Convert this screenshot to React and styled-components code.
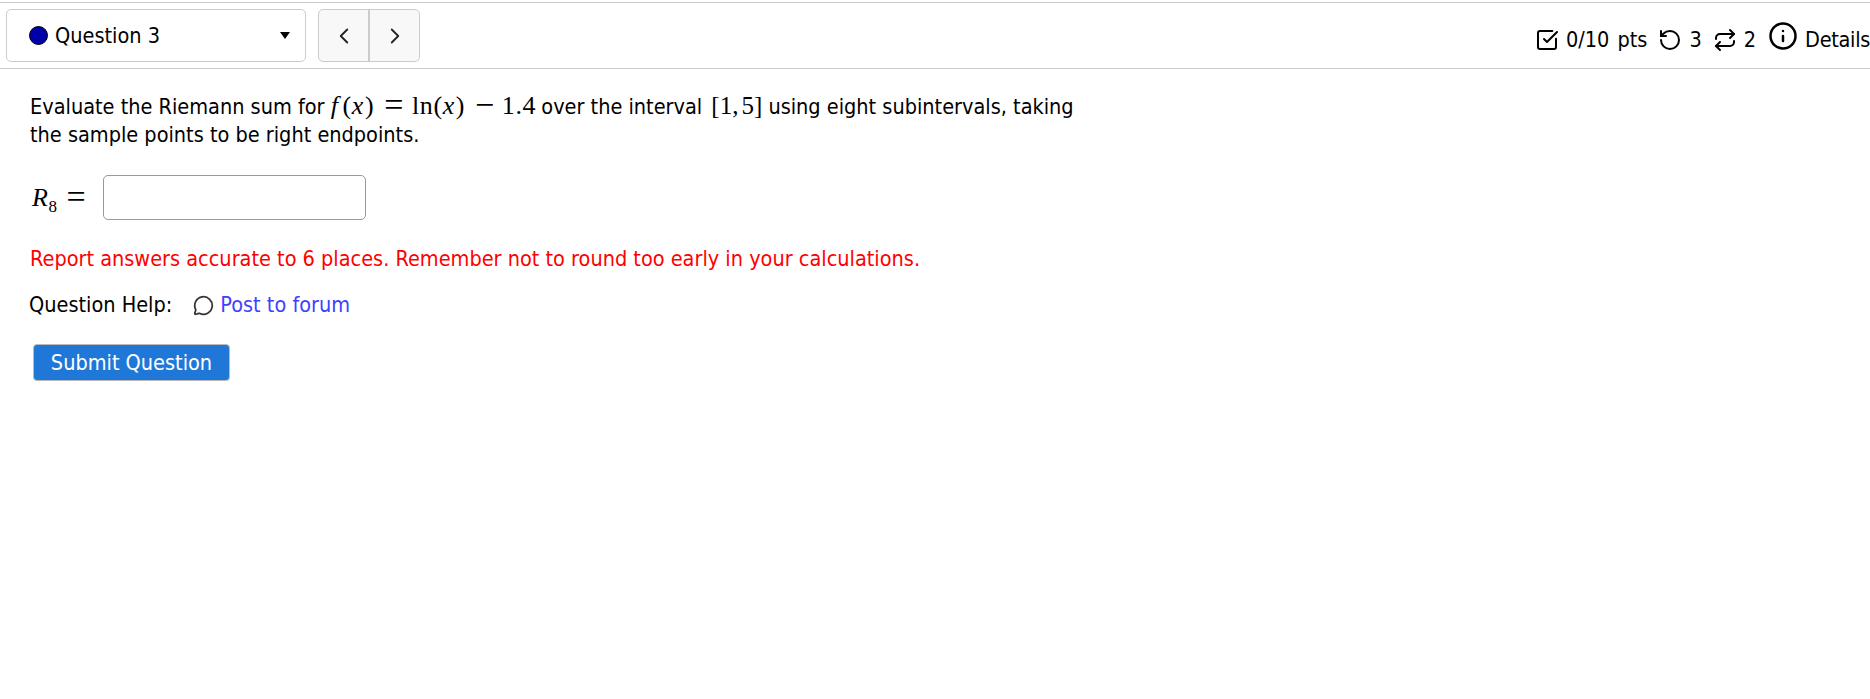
import React from 'react';
import styled, { createGlobalStyle } from 'styled-components';
import { ChevronLeft, ChevronRight, SquareCheckBig, RotateCcw, Repeat, Info, MessageCircle } from 'lucide-react';

const GlobalStyle = createGlobalStyle`
  html, body {
    margin: 0;
    padding: 0;
    background: #fff;
    color: #000;
    font-family: "DejaVu Sans Condensed", "DejaVu Sans", sans-serif;
    font-stretch: condensed;
    font-size: 21.5px;
  }
`;

const Page = styled.div`
  width: 1870px;
  height: 699px;
  overflow: hidden;
  padding-top: 2px;
  box-sizing: border-box;
`;

const Toolbar = styled.div`
  height: 67px;
  box-sizing: border-box;
  border-top: 1px solid #ccc;
  border-bottom: 1px solid #ccc;
  display: flex;
  justify-content: space-between;
  padding: 6px 0 0 6px;
`;

const LeftGroup = styled.div`
  display: flex;
  gap: 12px;
  height: 53px;
`;

const QuestionSelect = styled.div`
  width: 300px;
  box-sizing: border-box;
  border: 1px solid #ccc;
  border-radius: 5px;
  background: #fff;
  display: flex;
  align-items: center;
  padding: 0 15px 0 22px;
`;

const StatusDot = styled.span`
  width: 17px;
  height: 17px;
  border-radius: 50%;
  background: #0000a8;
  border: 1px solid #000;
  margin-right: 7px;
`;

const SelectLabel = styled.span`
  flex: 1;
`;

const Caret = styled.span`
  width: 0;
  height: 0;
  border-left: 5.5px solid transparent;
  border-right: 5.5px solid transparent;
  border-top: 7px solid #000;
`;

const NavGroup = styled.div`
  display: flex;
  width: 102px;
  box-sizing: border-box;
  border: 1px solid #ccc;
  border-radius: 5px;
  background: #f8f8f8;
`;

const NavButton = styled.div`
  flex: 1;
  display: flex;
  align-items: center;
  justify-content: center;
  color: #222;
  & + & {
    border-left: 2px solid #ccc;
  }
`;

const Stats = styled.div`
  display: flex;
  align-items: flex-start;
  padding-top: 16px;
`;

const Stat = styled.span`
  display: flex;
  align-items: center;
  gap: ${(p) => p.$gap ?? 7}px;
  margin-left: ${(p) => p.$left ?? 11}px;
  line-height: 30px;
  word-spacing: ${(p) => p.$words ?? 0}px;
  letter-spacing: ${(p) => p.$tracking ?? 0}px;
  white-space: nowrap;
`;

const RaisedInfo = styled(Info)`
  margin-top: -8px;
`;

const Content = styled.div`
  padding: 24px 0 0 30px;
`;

const Question = styled.p`
  width: 1060px;
  margin: 0;
  line-height: 28px;
`;

const MathRun = styled.span`
  font-family: "Liberation Serif", serif;
  font-stretch: normal;
  font-size: 26px;
  line-height: 20px;
  letter-spacing: 0.6px;
  white-space: nowrap;
  margin: ${(p) => p.$margin || '0 3px'};
`;

const IntervalRun = styled(MathRun)`
  font-size: 25px;
  letter-spacing: 0;
`;

const MathVar = styled.i`
  font-style: italic;
  margin-right: ${(p) => p.$after ?? 1}px;
`;

const MathSub = styled.sub`
  font-size: 17px;
  line-height: 0;
  margin-left: -1px;
`;

const MathOp = styled.span`
  font-size: 34px;
  line-height: 0;
  vertical-align: -2px;
  margin: ${(p) => p.$margin || '0 9px'};
`;

const MathComma = styled.span`
  margin-right: 3px;
`;

const AnswerRow = styled.div`
  display: flex;
  align-items: center;
  margin-top: 26px;
`;

const AnswerInput = styled.input`
  width: 263px;
  height: 45px;
  box-sizing: border-box;
  margin-left: 8px;
  border: 1px solid #999;
  border-radius: 5px;
  background: #fff;
`;

const Warning = styled.p`
  margin: 25px 0 0 0;
  color: #f00;
  line-height: 28px;
`;

const HelpRow = styled.div`
  display: flex;
  align-items: center;
  margin: 18px 0 0 -1px;
  line-height: 28px;
`;

const ForumLink = styled.a`
  display: flex;
  align-items: center;
  gap: 6px;
  margin-left: 21px;
  color: #4040ff;
  text-decoration: none;
`;

const ForumIcon = styled(MessageCircle)`
  color: #333;
`;

const SubmitButton = styled.button`
  display: block;
  margin: 25px 0 0 3px;
  width: 197px;
  height: 37px;
  padding: 0;
  border: 1px solid #bbb;
  border-radius: 4px;
  background: #1f78d8;
  color: #fff;
  font: inherit;
  font-stretch: condensed;
`;

export default function App() {
  return (
    <Page>
      <GlobalStyle />
      <Toolbar>
        <LeftGroup>
          <QuestionSelect>
            <StatusDot />
            <SelectLabel>Question 3</SelectLabel>
            <Caret />
          </QuestionSelect>
          <NavGroup>
            <NavButton><ChevronLeft size={26} strokeWidth={1.7} /></NavButton>
            <NavButton><ChevronRight size={26} strokeWidth={1.7} /></NavButton>
          </NavGroup>
        </LeftGroup>
        <Stats>
          <Stat $words={2}><SquareCheckBig size={24} />0/10 pts</Stat>
          <Stat><RotateCcw size={24} />3</Stat>
          <Stat><Repeat size={24} />2</Stat>
          <Stat $left={12} $tracking={-0.3}><RaisedInfo size={30} />Details</Stat>
        </Stats>
      </Toolbar>
      <Content>
        <Question>
          Evaluate the Riemann sum for{' '}
          <MathRun $margin="0 -1px 0 0"><MathVar $after={4}>f</MathVar>(<MathVar>x</MathVar>)<MathOp $margin="0 8px 0 10px">=</MathOp>ln(<MathVar>x</MathVar>)<MathOp $margin="0 7px 0 10px">−</MathOp>1.4</MathRun>{' '}
          over the interval <IntervalRun $margin="0 0 0 3px">[1<MathComma>,</MathComma>5]</IntervalRun> using eight subintervals, taking the sample points to be right endpoints.
        </Question>
        <AnswerRow>
          <MathRun $margin="0 0 0 2px"><MathVar>R</MathVar><MathSub>8</MathSub><MathOp>=</MathOp></MathRun>
          <AnswerInput />
        </AnswerRow>
        <Warning>Report answers accurate to 6 places. Remember not to round too early in your calculations.</Warning>
        <HelpRow>
          Question Help:
          <ForumLink href="#"><ForumIcon size={21} />Post to forum</ForumLink>
        </HelpRow>
        <SubmitButton>Submit Question</SubmitButton>
      </Content>
    </Page>
  );
}
